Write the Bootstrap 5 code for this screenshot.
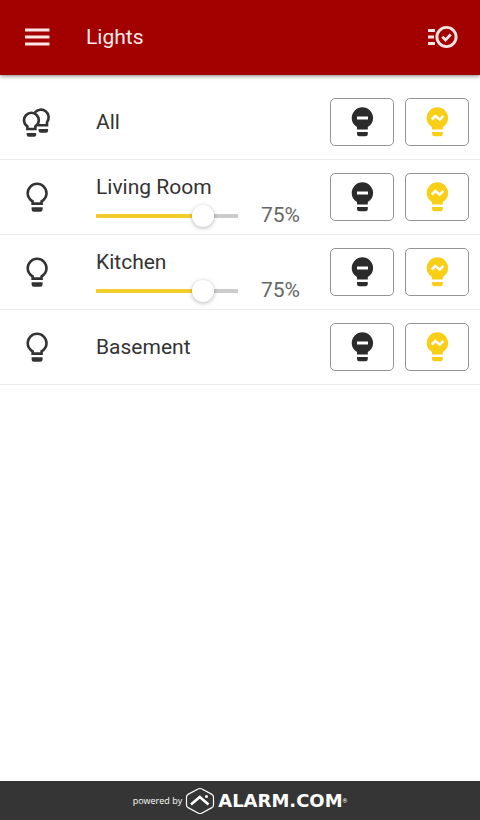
<!DOCTYPE html>
<html lang="en">
<head>
<meta charset="utf-8">
<meta name="viewport" content="width=device-width, initial-scale=1">
<title>Lights</title>
<link href="https://cdn.jsdelivr.net/npm/bootstrap@5.3.0/dist/css/bootstrap.min.css" rel="stylesheet">
<style>
  body { font-family: Roboto, "Liberation Sans", sans-serif; color: #333; background: #fff; }
  .top-bar { background: #a30000; height: 75px; padding: 0 20px 1px; box-shadow: 0 1px 4px rgba(0,0,0,.5); }
  .top-bar h1 { font-size: 21px; line-height: 26px; margin-left: 32px; font-weight: 400; color: #fbeaea; }
  .icon-btn { --bs-btn-padding-x: 0; --bs-btn-padding-y: 0; width: 34px; height: 34px; color: #fbe4e4; border: 0; }
  .icon-btn:hover { color: #fff; }
  .light-list { padding-top: 10px; }
  .light-row { height: 75px; padding: 0 11px 0 20px; border-bottom: 1px solid #ececec; }
  .light-icon { width: 34px; margin-right: 42px; }
  .light-name { font-size: 21px; line-height: 26px; }
  .dim-group { padding-top: 7px; }
  .level { font-size: 21px; line-height: 26px; width: 40px; margin: 2px 29px 0 23px; color: #666; }
  .action { width: 64px; height: 48px; --bs-btn-padding-x: 0; --bs-btn-padding-y: 0; border: 1px solid #949494; border-radius: 5px; background: #fff; }
  .actions { gap: 11px; }
  .on { color: #f8cf16; }
  .off { color: #2b2b2b; }
  .dimmer { display: block; appearance: none; -webkit-appearance: none; width: calc(100% + 22px); height: 24px; margin: 4px -11px 0; background: none; }
  .dimmer::-webkit-slider-runnable-track {
    height: 4px;
    background: linear-gradient(to right, #f3ce2b var(--level), #ccc var(--level)) 11px 0 / calc(100% - 22px) 4px no-repeat;
  }
  .dimmer::-webkit-slider-thumb { -webkit-appearance: none; width: 22px; height: 22px; margin-top: -9px; border-radius: 50%; background: #fff; border: 0; box-shadow: 0 1px 4px rgba(0,0,0,.3); }
  .brand-bar { background: #353535; height: 39px; color: #fff; }
  .powered { font-family: "Open Sans", sans-serif; font-size: 9px; line-height: 14px; }
  .brand-logo { margin: 0 3px; }
  .brand-name { font-family: "DejaVu Sans", sans-serif; font-weight: 700; font-size: 18px; line-height: 20px; }
  .reg { font-size: 6px; line-height: 12px; }
</style>
<script src="https://cdn.jsdelivr.net/npm/bootstrap@5.3.0/dist/js/bootstrap.bundle.min.js"></script>
</head>
<body class="d-flex flex-column min-vh-100">
<svg class="d-none" aria-hidden="true">
  <symbol id="bulb" viewBox="0 0 34 34">
    <path d="M12.600 23.600V21.300C10 19.700 7.700 17.200 7.700 13.200a9.400 9.400 0 0 1 18.800 0c0 4-2.300 6.500-4.900 8.100v2.300z" fill="none" stroke="currentColor" stroke-width="2.600"/>
    <path d="M11.600 27.300h11v2.200q0 2.300-2.300 2.300h-6.400q-2.300 0-2.300-2.300z" fill="currentColor"/>
  </symbol>
  <symbol id="bulbs" viewBox="0 0 34 34">
    <path d="M14.800 7.600A7.600 7.600 0 1 1 27 17.200v3H18" fill="none" stroke="currentColor" stroke-width="2.600"/>
    <path d="M7.400 24v-2.600C5.400 20.100 4 18 4 15.200a7.400 7.400 0 0 1 14.800 0c0 2.800-1.400 4.900-3.400 6.200V24z" fill="none" stroke="currentColor" stroke-width="2.600"/>
    <path d="M6.700 28h9.500v1.800q0 2-2 2H8.700q-2 0-2-2zM18.600 24h9.500v1.800q0 2-2 2h-5.500q-2 0-2-2z" fill="currentColor"/>
  </symbol>
  <symbol id="bulb-off" viewBox="0 0 24 32">
    <path fill="currentColor" fill-rule="evenodd" d="M7 23.500v-2.500C3.500 19 1.700 16 1.700 12a10.700 10.700 0 0 1 21.400 0c0 4-1.800 7-5.300 9v2.500zM7 10.500v3h11v-3z"/>
    <path fill="currentColor" d="M7 26h10.800v2q0 2.300-2.300 2.300H9.300Q7 30.300 7 28z"/>
  </symbol>
  <symbol id="bulb-on" viewBox="0 0 24 32">
    <path fill="currentColor" d="M7 23.500v-2.500C3.500 19 1.700 16 1.700 12a10.700 10.700 0 0 1 21.400 0c0 4-1.800 7-5.300 9v2.500z"/>
    <path d="M6.800 13.500l3.500-3.500 4.500 3.500 3.500-3.600" fill="none" stroke="#fff" stroke-width="2.500"/>
    <path fill="currentColor" d="M7 26h10.800v2q0 2.300-2.300 2.300H9.300Q7 30.300 7 28z"/>
  </symbol>
</svg>

<header class="top-bar d-flex align-items-center">
  <button type="button" class="btn icon-btn d-flex" aria-label="Menu">
    <svg width="34" height="34" viewBox="0 0 34 34"><path d="M5 10h24.500M5 17h24.500M5 24h24.500" stroke="currentColor" stroke-width="3"/></svg>
  </button>
  <h1 class="mb-0">Lights</h1>
  <button type="button" class="btn icon-btn d-flex ms-auto" aria-label="Select lights">
    <svg width="34" height="34" viewBox="0 0 34 34" fill="none" stroke="currentColor"><path d="M2 10.500h7M2 17h6M2 23.500h7" stroke-width="2.900"/><circle cx="20.500" cy="17" r="9.600" stroke-width="2.900"/><path d="M16.300 16.800l3.200 3.200 5.200-5.500" stroke-width="2.900"/></svg>
  </button>
</header>

<main class="light-list flex-grow-1">
  <section class="light-row d-flex align-items-center">
    <svg class="light-icon" height="34" aria-hidden="true"><use href="#bulbs"/></svg>
    <div class="light-name flex-grow-1">All</div>
    <div class="actions d-flex">
      <button type="button" class="btn action off d-flex align-items-center justify-content-center" aria-label="All off"><svg width="24" height="32"><use href="#bulb-off"/></svg></button>
      <button type="button" class="btn action on d-flex align-items-center justify-content-center" aria-label="All on"><svg width="24" height="32"><use href="#bulb-on"/></svg></button>
    </div>
  </section>
  <section class="light-row d-flex align-items-center">
    <svg class="light-icon" height="34" aria-hidden="true"><use href="#bulb"/></svg>
    <div class="dim-group flex-grow-1">
      <label class="light-name d-block" for="living">Living Room</label>
      <div class="d-flex align-items-start">
        <div class="flex-grow-1"><input class="dimmer" id="living" type="range" min="0" max="100" value="75" style="--level: 75%"></div>
        <output class="level" for="living">75%</output>
      </div>
    </div>
    <div class="actions d-flex">
      <button type="button" class="btn action off d-flex align-items-center justify-content-center" aria-label="Living Room off"><svg width="24" height="32"><use href="#bulb-off"/></svg></button>
      <button type="button" class="btn action on d-flex align-items-center justify-content-center" aria-label="Living Room on"><svg width="24" height="32"><use href="#bulb-on"/></svg></button>
    </div>
  </section>
  <section class="light-row d-flex align-items-center">
    <svg class="light-icon" height="34" aria-hidden="true"><use href="#bulb"/></svg>
    <div class="dim-group flex-grow-1">
      <label class="light-name d-block" for="kitchen">Kitchen</label>
      <div class="d-flex align-items-start">
        <div class="flex-grow-1"><input class="dimmer" id="kitchen" type="range" min="0" max="100" value="75" style="--level: 75%"></div>
        <output class="level" for="kitchen">75%</output>
      </div>
    </div>
    <div class="actions d-flex">
      <button type="button" class="btn action off d-flex align-items-center justify-content-center" aria-label="Kitchen off"><svg width="24" height="32"><use href="#bulb-off"/></svg></button>
      <button type="button" class="btn action on d-flex align-items-center justify-content-center" aria-label="Kitchen on"><svg width="24" height="32"><use href="#bulb-on"/></svg></button>
    </div>
  </section>
  <section class="light-row d-flex align-items-center">
    <svg class="light-icon" height="34" aria-hidden="true"><use href="#bulb"/></svg>
    <div class="light-name flex-grow-1">Basement</div>
    <div class="actions d-flex">
      <button type="button" class="btn action off d-flex align-items-center justify-content-center" aria-label="Basement off"><svg width="24" height="32"><use href="#bulb-off"/></svg></button>
      <button type="button" class="btn action on d-flex align-items-center justify-content-center" aria-label="Basement on"><svg width="24" height="32"><use href="#bulb-on"/></svg></button>
    </div>
  </section>
</main>

<footer class="brand-bar d-flex align-items-center justify-content-center">
  <span class="powered">powered by</span>
  <svg class="brand-logo" width="30" height="28" viewBox="0 0 30 28" fill="none" stroke="#fff" aria-hidden="true">
    <path d="M13 2.100q2-1.200 4 0l9.500 5q2 1.100 2 3v7.800q0 1.900-2 3l-9.500 5q-2 1.200-4 0l-9.500-5q-2-1.100-2-3v-7.800q0-1.900 2-3z" stroke-width="1.200"/>
    <path d="M6 17.500L14.800 10l8.700 7.500" stroke-width="2.600"/><circle cx="21.500" cy="9.500" r="1.500" fill="#fff" stroke="none"/>
  </svg>
  <span class="brand-name">ALARM.COM</span><span class="reg align-self-center">®</span>
</footer>
<script>
  document.querySelectorAll('.dimmer').forEach(function (input) {
    input.addEventListener('input', function () {
      input.style.setProperty('--level', input.value + '%');
      document.querySelector('output[for="' + input.id + '"]').textContent = input.value + '%';
    });
  });
</script>
</body>
</html>
